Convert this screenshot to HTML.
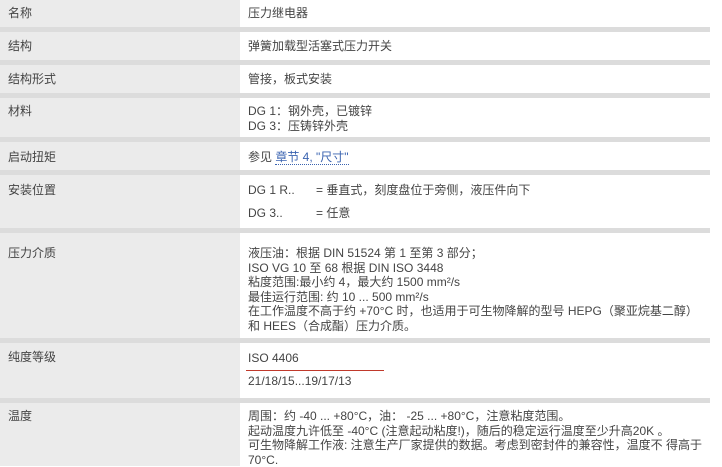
<!DOCTYPE html>
<html><head><meta charset="utf-8"><style>
body{margin:0;width:722px;height:466px;background:#fff;position:relative;overflow:hidden;font-family:"Liberation Sans","Noto Sans CJK SC",sans-serif;font-size:12px;color:#444;}
.l{position:absolute;left:0;width:240px;background:#ebebeb;}
.s{position:absolute;left:0;width:710px;height:5px;background:#dcdcdc;}
.t{position:absolute;line-height:14.6px;white-space:nowrap;}
a{color:#3a63b0;text-decoration:none;border-bottom:1px dotted #3a63b0;}
</style></head><body>
<div class="l" style="top:0;height:466px"></div>
<div class="s" style="top:27px"></div>
<div class="s" style="top:60px"></div>
<div class="s" style="top:93px"></div>
<div class="s" style="top:137px"></div>
<div class="s" style="top:170px"></div>
<div class="s" style="top:228px"></div>
<div class="s" style="top:338px"></div>
<div class="s" style="top:398px"></div>

<div class="t" style="left:8px;top:6px">名称</div>
<div class="t" style="left:248px;top:6px">压力继电器</div>
<div class="t" style="left:8px;top:39px">结构</div>
<div class="t" style="left:248px;top:39px">弹簧加载型活塞式压力开关</div>
<div class="t" style="left:8px;top:72px">结构形式</div>
<div class="t" style="left:248px;top:72px">管接，板式安装</div>
<div class="t" style="left:8px;top:104px">材料</div>
<div class="t" style="left:248px;top:104px">DG 1：钢外壳，已镀锌<br>DG 3：压铸锌外壳</div>
<div class="t" style="left:8px;top:150px">启动扭矩</div>
<div class="t" style="left:248px;top:150px">参见 <a>章节 4, "尺寸"</a></div>
<div class="t" style="left:8px;top:183px">安装位置</div>
<div class="t" style="left:248px;top:183px">DG 1 R..</div>
<div class="t" style="left:316px;top:183px">= 垂直式，刻度盘位于旁侧，液压件向下</div>
<div class="t" style="left:248px;top:206px">DG 3..</div>
<div class="t" style="left:316px;top:206px">= 任意</div>
<div class="t" style="left:8px;top:246px">压力介质</div>
<div class="t" style="left:248px;top:246px">液压油：根据 DIN 51524 第 1 至第 3 部分；<br>ISO VG 10 至 68 根据 DIN ISO 3448<br>粘度范围:最小约 4，最大约 1500 mm²/s<br>最佳运行范围: 约 10 ... 500 mm²/s<br>在工作温度不高于约 +70°C 时，也适用于可生物降解的型号 HEPG（聚亚烷基二醇）<br>和 HEES（合成酯）压力介质。</div>
<div class="t" style="left:8px;top:350px">纯度等级</div>
<div class="t" style="left:248px;top:351px">ISO 4406</div>
<div style="position:absolute;left:246px;top:370px;width:138px;height:1px;background:#c0392b"></div>
<div class="t" style="left:248px;top:374px">21/18/15...19/17/13</div>
<div class="t" style="left:8px;top:409px">温度</div>
<div class="t" style="left:248px;top:409px">周围：约 -40 ... +80°C，油： -25 ... +80°C，注意粘度范围。<br>起动温度九许低至 -40°C (注意起动粘度!)，随后的稳定运行温度至少升高20K 。<br>可生物降解工作液: 注意生产厂家提供的数据。考虑到密封件的兼容性，温度不 得高于<br>70°C.</div>
</body></html>
